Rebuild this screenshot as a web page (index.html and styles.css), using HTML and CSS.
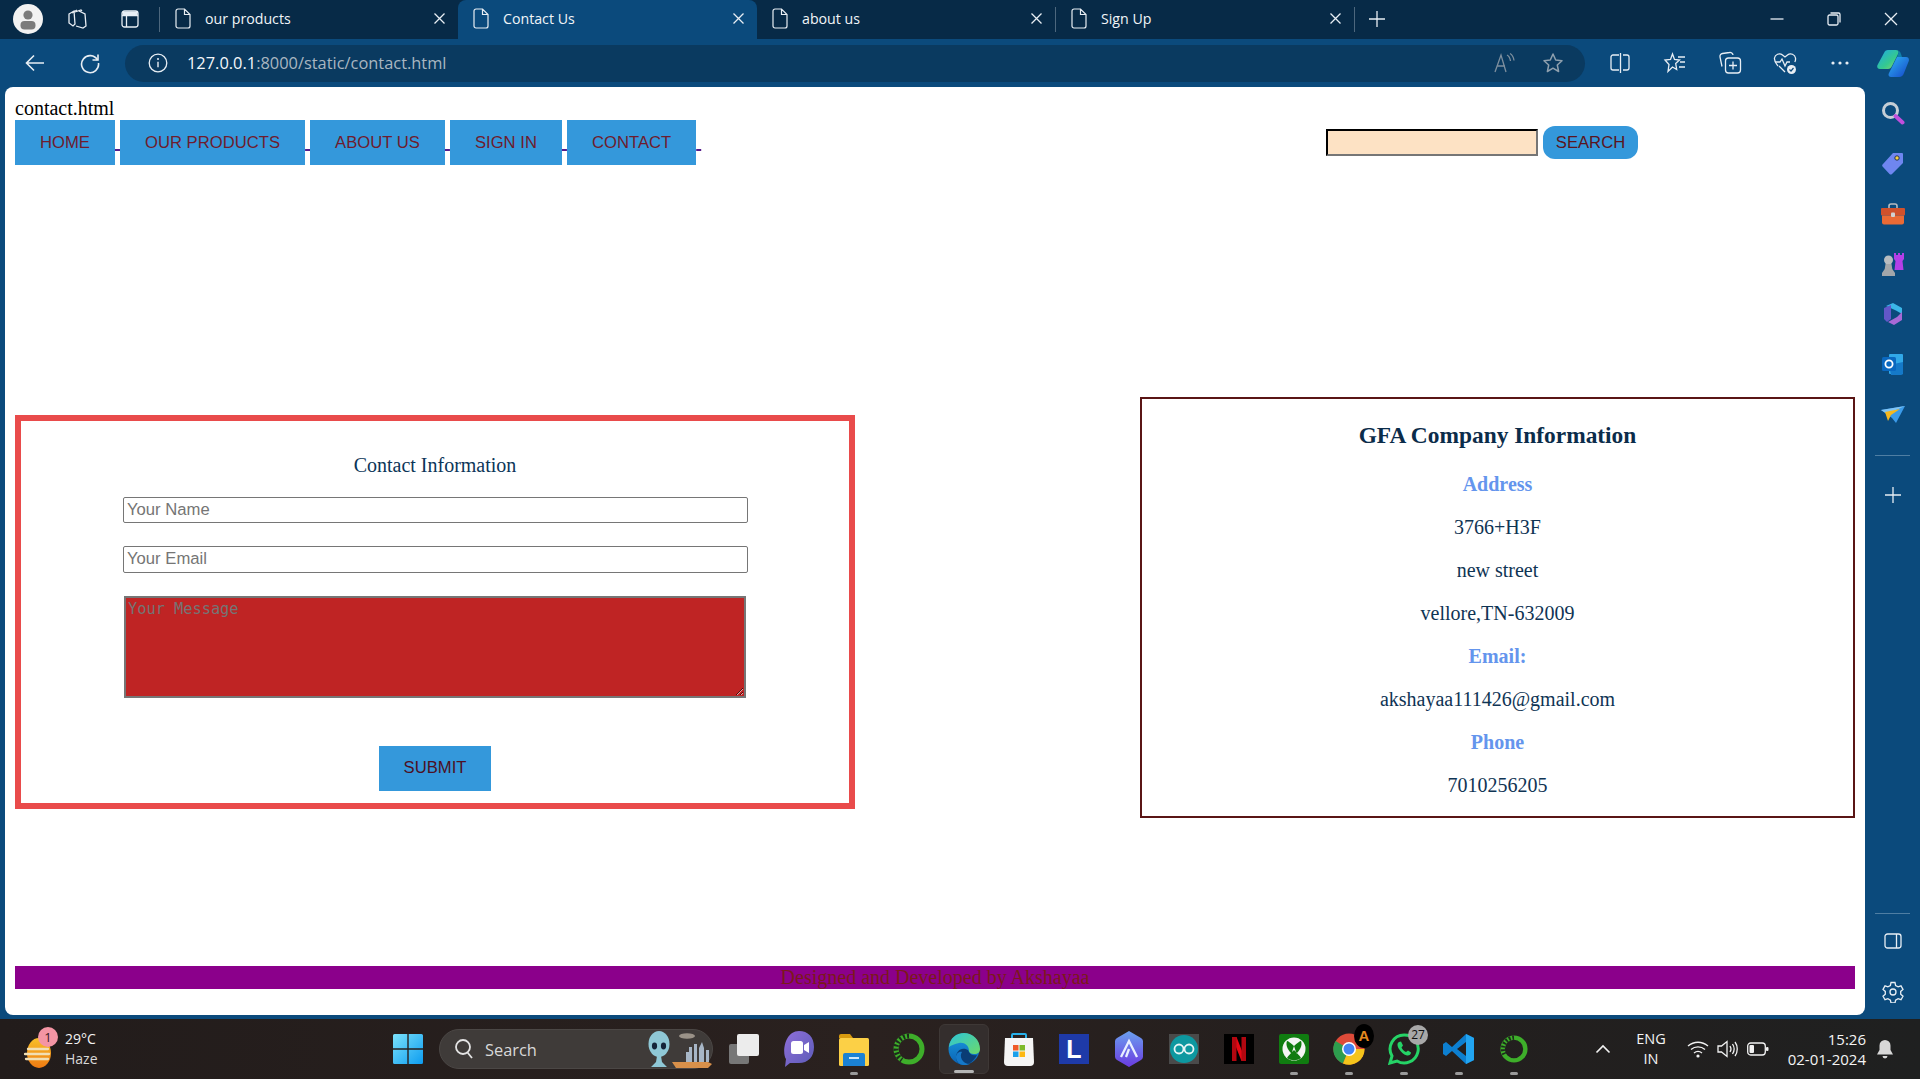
FILE: index.html
```html
<!DOCTYPE html>
<html lang="en">
<head>
<meta charset="utf-8">
<title>Contact Us</title>
<link rel="stylesheet" href="styles.css">
</head>
<body>
<div class="window">
  <header class="titlebar">
    <div class="avatar"><svg width="30" height="30" viewBox="0 0 30 30"><circle cx="15" cy="15" r="15" fill="#f2f2f2"/><circle cx="15" cy="11" r="4.6" fill="#7b7b7b"/><rect x="7.5" y="17" width="15" height="8.5" rx="4" fill="#7b7b7b"/></svg></div>
    <div class="tb-slot first"><svg width="22" height="22" viewBox="0 0 22 22" class="line"><path d="M3 6l5-3 1 13-2 2-4-3z"/><path d="M6 5l5-3"/><path d="M9 4l6-2 1 1"/><path d="M10 18l7 2 3-2-1-12-6-3"/></svg></div>
    <div class="tb-slot"><svg width="20" height="20" viewBox="0 0 20 20" class="line"><rect x="2" y="2" width="16" height="16" rx="2.5"/><path d="M2 6.5h16M6.5 6.5V18"/><rect x="2.5" y="2.5" width="15" height="4" fill="#e8eef4" stroke="none"/></svg></div>
    <span class="tb-sep"></span>
    <div class="tab"><svg class="doc" width="16" height="21" viewBox="0 0 16 21"><path d="M3 1h6.5L15 6.500V18a2 2 0 0 1-2 2H3a2 2 0 0 1-2-2V3a2 2 0 0 1 2-2zM9.500 1v5.500H15"/></svg><span class="tab-title">our products</span><svg class="tab-x line" width="11" height="11" viewBox="0 0 11 11"><path d="M.5.500l10 10M10.500.500l-10 10"/></svg></div>
    <div class="tab active"><svg class="doc" width="16" height="21" viewBox="0 0 16 21"><path d="M3 1h6.5L15 6.500V18a2 2 0 0 1-2 2H3a2 2 0 0 1-2-2V3a2 2 0 0 1 2-2zM9.500 1v5.500H15"/></svg><span class="tab-title">Contact Us</span><svg class="tab-x line" width="11" height="11" viewBox="0 0 11 11"><path d="M.5.500l10 10M10.500.500l-10 10"/></svg></div>
    <div class="tab"><svg class="doc" width="16" height="21" viewBox="0 0 16 21"><path d="M3 1h6.5L15 6.500V18a2 2 0 0 1-2 2H3a2 2 0 0 1-2-2V3a2 2 0 0 1 2-2zM9.500 1v5.500H15"/></svg><span class="tab-title">about us</span><svg class="tab-x line" width="11" height="11" viewBox="0 0 11 11"><path d="M.5.500l10 10M10.500.500l-10 10"/></svg></div>
    <span class="tb-sep tight"></span>
    <div class="tab"><svg class="doc" width="16" height="21" viewBox="0 0 16 21"><path d="M3 1h6.5L15 6.500V18a2 2 0 0 1-2 2H3a2 2 0 0 1-2-2V3a2 2 0 0 1 2-2zM9.500 1v5.500H15"/></svg><span class="tab-title">Sign Up</span><svg class="tab-x line" width="11" height="11" viewBox="0 0 11 11"><path d="M.5.500l10 10M10.500.500l-10 10"/></svg></div>
    <span class="tb-sep tight"></span>
    <div class="tb-plus"><svg width="18" height="18" viewBox="0 0 18 18" class="line"><path d="M9 1v16M1 9h16"/></svg></div>
    <div class="win-controls">
      <span class="win-btn"><svg width="14" height="14" viewBox="0 0 14 14" class="line"><path d="M0.500 7h13"/></svg></span>
      <span class="win-btn"><svg width="14" height="14" viewBox="0 0 14 14" class="line"><rect x="1" y="3" width="10" height="10" rx="1.500"/><path d="M3.500 1h8a1.500 1.500 0 0 1 1.500 1.500v8"/></svg></span>
      <span class="win-btn"><svg width="14" height="14" viewBox="0 0 14 14" class="line"><path d="M1 1l12 12M13 1L1 13"/></svg></span>
    </div>
  </header>

  <div class="toolbar">
    <div class="tool first"><svg width="22" height="22" viewBox="0 0 22 22" class="line wide"><path d="M20 11H3M10 3.500L2.500 11l7.500 7.500"/></svg></div>
    <div class="tool"><svg width="22" height="22" viewBox="0 0 22 22" class="line wide"><path d="M18.500 8A8.500 8.500 0 1 0 19.500 11"/><path d="M19 2.500V8h-5.500"/></svg></div>
    <div class="address">
      <svg class="info" width="20" height="20" viewBox="0 0 20 20"><circle cx="10" cy="10" r="8.800" fill="none" stroke="#e8eef4" stroke-width="1.300"/><path d="M10 8.800v5.500" stroke="#e8eef4" stroke-width="1.400"/><circle cx="10" cy="6" r="1" fill="#e8eef4"/></svg>
      <span class="url"><span class="url-host">127.0.0.1</span>:8000/static/contact.html</span>
      <svg class="read" width="22" height="22" viewBox="0 0 22 22"><path d="M2 20L8 3l5 17M4 14h8M14 3c2 1 3 3 3.500 6M17 1.500c2.500 1.500 3.500 3.500 4 7" fill="none" stroke="#7e8f9e" stroke-width="1.300"/></svg>
      <svg class="star" width="22" height="22" viewBox="0 0 22 22"><path d="M11 2l2.700 6 6.300.7-4.700 4.300 1.300 6.500L11 16.200 5.400 19.500 6.700 13 2 8.700 8.300 8z" fill="none" stroke="#8fa0ae" stroke-width="1.500" stroke-linejoin="round"/></svg>
    </div>
    <div class="tool gap"><svg width="22" height="22" viewBox="0 0 22 22" class="line"><path d="M10 3H4a2 2 0 0 0-2 2v11a2 2 0 0 0 2 2h6M14 3h4a2 2 0 0 1 2 2v11a2 2 0 0 1-2 2h-4M11.500 1v20" /></svg></div>
    <div class="tool"><svg width="24" height="22" viewBox="0 0 24 22" class="line"><path d="M9.500 2l2 5.500 5 .5-3.800 3.500 1 6-4.200-2.500-4.500 4.500 1-7L2 8l5.500-.5zM15 5h7M17 10h5M16 15h6"/></svg></div>
    <div class="tool"><svg width="24" height="24" viewBox="0 0 24 24" class="line"><path d="M4 15.500L2 6a3 3 0 0 1 2.500-3.500l7-1a3 3 0 0 1 3.500 2.500"/><rect x="7.500" y="7" width="15" height="15" rx="3"/><path d="M15 10.500v8M11 14.500h8"/></svg></div>
    <div class="tool"><svg width="24" height="24" viewBox="0 0 24 24"><path d="M5 15C2.500 12 1 10.500 1.500 7 2 3.500 6.500 1.500 9.500 4l2.500 2 2.500-2c3-2.500 7.500-.5 8 3 .2 1.500-.1 3-.7 4" fill="none" stroke="#e8eef4" stroke-width="1.300"/><path d="M2 11h5l2-3 3 7 2-4h3M6 15l6 6" fill="none" stroke="#e8eef4" stroke-width="1.300"/><circle cx="18.500" cy="18.500" r="4.500" fill="#e8eef4"/><path d="M16.500 18.500l1.500 1.500 2.500-3" fill="none" stroke="#0b4a7c" stroke-width="1.200"/></svg></div>
    <div class="tool"><svg width="20" height="6" viewBox="0 0 20 6"><circle cx="3" cy="3" r="1.600" fill="#e8eef4"/><circle cx="10" cy="3" r="1.600" fill="#e8eef4"/><circle cx="17" cy="3" r="1.600" fill="#e8eef4"/></svg></div>
    <div class="copilot"><svg width="32" height="28" viewBox="0 0 32 28"><defs><linearGradient id="cp1" x1="0" y1="0" x2="1" y2="1"><stop offset="0" stop-color="#1ea8e8"/><stop offset=".6" stop-color="#35c98f"/><stop offset="1" stop-color="#8ed66b"/></linearGradient><linearGradient id="cp2" x1="0" y1="0" x2="1" y2="1"><stop offset="0" stop-color="#2fb5f5"/><stop offset="1" stop-color="#1546c9"/></linearGradient></defs><path d="M11 1h8c2 0 3 1 2.500 3L15 17c-1 2-2 3-4 3H3c-2.500 0-3.300-2-2.500-4L7 4c.8-2 2-3 4-3z" fill="url(#cp1)"/><path d="M20 8h9c2.500 0 3.300 2 2.800 4L27 24c-.8 2.500-2.500 4-5 4h-8c-2.500 0-3-2-2-4z" fill="url(#cp2)"/><path d="M19 1c2.500 0 4 1 5 4l1 3h-5l1.500-4C22 2 21 1 19 1z" fill="#0f7fa8"/></svg></div>
  </div>

  <div class="workspace">
    <main class="page">
      <div class="doc-name">contact.html</div>
      <div class="topbar">
        <nav class="nav"><a class="nav-link" href="#"><button class="btn" type="button">HOME</button>&nbsp;</a><a class="nav-link" href="#"><button class="btn" type="button">OUR PRODUCTS</button>&nbsp;</a><a class="nav-link" href="#"><button class="btn" type="button">ABOUT US</button>&nbsp;</a><a class="nav-link" href="#"><button class="btn" type="button">SIGN IN</button>&nbsp;</a><a class="nav-link" href="#"><button class="btn" type="button">CONTACT</button>&nbsp;</a></nav>
        <form class="search"><input class="search-input" type="text"><button class="search-btn" type="button">SEARCH</button></form>
      </div>
      <div class="content">
        <form class="contact-form">
          <h3 class="form-title">Contact Information</h3>
          <input class="field name" type="text" placeholder="Your Name">
          <input class="field email" type="email" placeholder="Your Email">
          <textarea class="message" placeholder="Your Message"></textarea>
          <button class="btn submit" type="button">SUBMIT</button>
        </form>
        <section class="company">
          <h2 class="company-title">GFA Company Information</h2>
          <p class="label">Address</p>
          <p>3766+H3F</p>
          <p>new street</p>
          <p>vellore,TN-632009</p>
          <p class="label">Email:</p>
          <p>akshayaa111426@gmail.com</p>
          <p class="label">Phone</p>
          <p>7010256205</p>
        </section>
      </div>
      <footer class="site-footer">Designed and Developed by Akshayaa</footer>
    </main>
    <aside class="sidebar">
      <div class="side-item"><svg width="24" height="24" viewBox="0 0 24 24"><circle cx="9.500" cy="9.500" r="7" fill="none" stroke="#c5ced6" stroke-width="3"/><path d="M14.500 15l7 6.500" stroke="#c04fdc" stroke-width="4" stroke-linecap="round"/></svg></div>
      <div class="side-item"><svg width="24" height="24" viewBox="0 0 24 24"><path d="M12 2h9a1 1 0 0 1 1 1v9L11 23a2 2 0 0 1-2.500 0L2 16a2 2 0 0 1 0-3z" fill="#6f86f0"/><circle cx="16" cy="7" r="2.200" fill="#f8d040" stroke="#20305a"/></svg></div>
      <div class="side-item"><svg width="24" height="22" viewBox="0 0 24 22"><path d="M8 5V3a2 2 0 0 1 2-2h4a2 2 0 0 1 2 2v2" fill="none" stroke="#b8bcc0" stroke-width="1.600"/><rect y="5" width="24" height="7.500" rx="1" fill="#d0512c"/><path d="M1 12.500h22v7a2 2 0 0 1-2 2H3a2 2 0 0 1-2-2z" fill="#ea6a35"/><rect x="10" y="9.500" width="4" height="4.500" rx="1" fill="#d2d2d2"/></svg></div>
      <div class="side-item"><svg width="24" height="24" viewBox="0 0 24 24"><path d="M13 1h2v2h2V1h2v2h2V1h2v6l-1.500 2 1 9h-9l1-9L13 7z" fill="#b43fe8"/><circle cx="7.500" cy="8" r="4.500" fill="#b8bcc0"/><path d="M4.500 12h6l.8 5 2.700 4v3H1v-3l2.700-4z" fill="#a2a6aa"/></svg></div>
      <div class="side-item"><svg width="24" height="24" viewBox="0 0 24 24"><path d="M12 1l9 5v6l-6-3.500L5 4z" fill="#3bb6e8"/><path d="M3 6l7-3v14l-4 3-3-3z" fill="#6257c9"/><path d="M21 10v8l-8 5-6-3 9-5z" fill="#a869d6"/><path d="M10 9l6 3-6 4z" fill="#0b4a7c"/></svg></div>
      <div class="side-item"><svg width="24" height="24" viewBox="0 0 24 24"><rect x="8" y="1" width="14" height="20" rx="1" fill="#31a8e8"/><path d="M8 12l14-3v11a2 2 0 0 1-2 2H10z" fill="#1579c8"/><rect x="1" y="4" width="14" height="14" rx="1.500" fill="#0a68c0"/><circle cx="8" cy="11" r="3.600" fill="none" stroke="#fff" stroke-width="1.800"/></svg></div>
      <div class="side-item"><svg width="24" height="18" viewBox="0 0 24 18"><path d="M0 4L24 0 15 17 11 12z" fill="#3b9bea"/><path d="M0 4l24-4L6 8z" fill="#7fc4f5"/><path d="M4 6l3 9 3-6 9-6z" fill="#f5b81e"/></svg></div>
      <div class="side-sep"></div>
      <div class="side-item plus"><svg width="16" height="16" viewBox="0 0 16 16" class="line"><path d="M8 0v16M0 8h16"/></svg></div>
      <div class="side-bottom">
        <div class="side-sep"></div>
        <div class="side-item small"><svg width="18" height="16" viewBox="0 0 18 16" class="line"><rect x="1" y="1" width="16" height="14" rx="2.500"/><path d="M12.500 1v14"/></svg></div>
        <div class="side-item small"><svg width="22" height="22" viewBox="0 0 22 22" class="line"><circle cx="11" cy="11" r="3"/><path d="M9 1.500h4l.6 3 2.500 1.400 2.900-1 2 3.500-2.300 2 0 2.800 2.300 2-2 3.500-2.900-1-2.500 1.400-.6 2.900H9l-.6-2.900-2.500-1.400-2.900 1-2-3.500 2.300-2v-2.800L1 8.400l2-3.500 2.900 1 2.500-1.400z"/></svg></div>
      </div>
    </aside>
  </div>

  <div class="taskbar">
    <div class="weather">
      <div class="weather-icon"><svg width="28" height="36" viewBox="0 0 28 36"><defs><linearGradient id="sun" x1="0" y1="0" x2="0" y2="1"><stop offset="0" stop-color="#f7c02a"/><stop offset="1" stop-color="#ef7a12"/></linearGradient></defs><ellipse cx="15" cy="19" rx="12" ry="15" fill="url(#sun)"/><path d="M4 15h20M1 20h24M2 25h22" stroke="#f1dfb4" stroke-width="2.300" stroke-linecap="round"/></svg><span class="weather-badge">1</span></div>
      <div class="weather-text"><span>29°C</span><span class="dim">Haze</span></div>
    </div>
    <div class="tasks">
      <div class="task"><svg width="30" height="30" viewBox="0 0 30 30"><defs><linearGradient id="winl" x1="0" y1="0" x2="1" y2="1"><stop offset="0" stop-color="#7be2fb"/><stop offset="1" stop-color="#0d9cf0"/></linearGradient></defs><path d="M0 1.500A1.500 1.500 0 0 1 1.500 0H14.300v14.300H0zM15.700 0H28.500A1.500 1.500 0 0 1 30 1.500V14.300H15.700zM0 15.700H14.300V30H1.500A1.500 1.500 0 0 1 0 28.500zM15.700 15.700H30V28.500A1.500 1.500 0 0 1 28.500 30H15.700z" fill="url(#winl)"/></svg></div>
      <div class="search-pill">
        <svg width="20" height="22" viewBox="0 0 20 22"><circle cx="9" cy="9" r="7" fill="none" stroke="#e4e4e4" stroke-width="1.800"/><path d="M13.500 14.500L18 20" stroke="#e4e4e4" stroke-width="1.800"/></svg>
        <span class="pill-text">Search</span>
        <svg class="alien" width="66" height="38" viewBox="0 0 66 38"><path d="M24 32h36l4 2-4 4H28z" fill="#d8904a"/><path d="M38 32V22h3v-5h3v15zM46 32V14h3v18zM51 32V18l3-6 2 6v14zM58 32V20h3v12z" fill="#a7b6c6"/><ellipse cx="39" cy="6" rx="8" ry="2.800" fill="#9a9288"/><ellipse cx="11" cy="14" rx="10.500" ry="13" fill="#8fc8d6"/><ellipse cx="6.500" cy="16" rx="2.600" ry="3.400" fill="#15253a"/><ellipse cx="15.500" cy="16" rx="2.600" ry="3.400" fill="#15253a"/><path d="M9 26h4l1 6 5 5H3l5-5z" fill="#8fc8d6"/></svg>
      </div>
      <div class="task taskview"><svg width="30" height="30" viewBox="0 0 30 30"><rect x="0" y="10" width="20" height="20" rx="2" fill="#777"/><rect x="8" y="0" width="22" height="22" rx="2" fill="#ececec"/></svg></div>
      <div class="task"><svg width="32" height="38" viewBox="0 0 32 38"><defs><linearGradient id="meet" x1="0" y1="0" x2="1" y2="1"><stop offset="0" stop-color="#8f6fd8"/><stop offset="1" stop-color="#5b5bb8"/></linearGradient></defs><path d="M16 1c9 0 15 6 15 16s-6 16-15 16H7l-5 4 1-8C-1 24 1 1 16 1z" fill="url(#meet)"/><rect x="8" y="11" width="12" height="13" rx="2.500" fill="#fff"/><path d="M21 15l5-3v11l-5-3z" fill="#fff"/></svg></div>
      <div class="task on"><svg width="30" height="33" viewBox="0 0 30 33"><path d="M0 3a2 2 0 0 1 2-2h9l3 4H0z" fill="#d79a0f"/><rect y="5" width="30" height="28" rx="1.500" fill="#fcd046"/><path d="M6 20h18a2 2 0 0 1 2 2v11H4V22a2 2 0 0 1 2-2z" fill="#1b82d4"/><rect x="10" y="24" width="10" height="2" fill="#cfe8fa"/></svg></div>
      <div class="task"><svg width="32" height="32" viewBox="0 0 32 32"><circle cx="16" cy="16" r="13" fill="none" stroke="#3eae2a" stroke-width="5"/><path d="M16 3A13 13 0 0 0 9 27" fill="none" stroke="#1d2b1c" stroke-width="5" stroke-dasharray="2 2"/></svg></div>
      <div class="task active-task"><svg width="32" height="34" viewBox="0 0 32 34"><defs><linearGradient id="edge1" x1="0" y1="0" x2="1" y2="1"><stop offset="0" stop-color="#2cc4d8"/><stop offset="1" stop-color="#6cd96a"/></linearGradient><linearGradient id="edge2" x1="0" y1="0" x2="0" y2="1"><stop offset="0" stop-color="#1a9be0"/><stop offset="1" stop-color="#0b63b4"/></linearGradient></defs><circle cx="16" cy="17" r="15.500" fill="url(#edge2)"/><path d="M1 15C2 6 8 1 16 1c9 0 16 7 16 16 0 3-2 5-6 5-3 0-5-1-5-3 0-6-5-9-10-8-4 1-8 2-10 4z" fill="url(#edge1)"/><path d="M20 18c2 5 6 6 9 5-3 6-8 10-14 10-4 0-7-3-7-8s5-11 12-7z" fill="#0a3d75"/><path d="M14 20c-3 4 0 12 8 12-2 1-5 1-7 1-4 0-7-4-7-8 0-3 3-6 6-5z" fill="#1578c8"/></svg></div>
      <div class="task"><svg width="30" height="34" viewBox="0 0 30 34"><path d="M8 6V3a1 1 0 0 1 1-1h12a1 1 0 0 1 1 1v3" fill="none" stroke="#27b0ea" stroke-width="2"/><path d="M1 6h28l1 24a4 4 0 0 1-4 4H4a4 4 0 0 1-4-4z" fill="#f5f5f5"/><rect x="9" y="13" width="5.500" height="5.500" fill="#ef5a28"/><rect x="15.500" y="13" width="5.500" height="5.500" fill="#7dba2a"/><rect x="9" y="19.500" width="5.500" height="5.500" fill="#1aa0ea"/><rect x="15.500" y="19.500" width="5.500" height="5.500" fill="#fdb813"/></svg></div>
      <div class="task"><span class="app-l">L</span></div>
      <div class="task"><svg width="28" height="36" viewBox="0 0 28 36"><defs><linearGradient id="arc" x1="0" y1="0" x2="0" y2="1"><stop offset="0" stop-color="#6aa0ef"/><stop offset="1" stop-color="#6b3be0"/></linearGradient></defs><path d="M14 0l12 7a4 4 0 0 1 2 3v16a4 4 0 0 1-2 3l-12 7-12-7a4 4 0 0 1-2-3V10a4 4 0 0 1 2-3z" fill="url(#arc)"/><path d="M6 26l8-16 8 16M14 18l-3 8" fill="none" stroke="#e9f0ff" stroke-width="2.300"/></svg></div>
      <div class="task"><span class="app-ino"><svg width="28" height="28" viewBox="0 0 28 28"><circle cx="14" cy="14" r="14" fill="#0d98a0"/><circle cx="9" cy="14" r="4.500" fill="none" stroke="#e6f5f5" stroke-width="1.800"/><circle cx="19" cy="14" r="4.500" fill="none" stroke="#e6f5f5" stroke-width="1.800"/></svg></span></div>
      <div class="task"><span class="app-n"><svg width="14" height="24" viewBox="0 0 14 24"><path d="M0 0h4.500L14 24H9.500z" fill="#e50914"/><path d="M0 0h4.500v24H0zM9.500 0H14v24H9.500z" fill="#b20710"/></svg></span></div>
      <div class="task on"><span class="app-x"><svg width="24" height="24" viewBox="0 0 24 24"><circle cx="12" cy="12" r="11.500" fill="#f4f4f4"/><path d="M12 9C9 6 6 4 5 4c-2 5 2 10 4.500 12.500M12 9c3-3 6-5 7-5 2 5-2 10-4.500 12.500M12 13c-3 3-6 6-7 8 4 3 10 3 14 0-1-2-4-5-7-8z" fill="#107c10"/></svg></span></div>
      <div class="task on badge-host"><svg width="32" height="32" viewBox="0 0 32 32"><circle cx="16" cy="16" r="15.500" fill="#dd4b39"/><path d="M16 16L2.500 8A15.500 15.500 0 0 0 10 30.500z" fill="#2d9d4e"/><path d="M16 16l-6 14.500A15.500 15.500 0 0 0 31.500 16z" fill="#f5c41b"/><circle cx="16" cy="16" r="7" fill="#fff"/><circle cx="16" cy="16" r="5.500" fill="#4285f4"/></svg><span class="app-badge amazon">A</span></div>
      <div class="task on badge-host"><svg width="32" height="32" viewBox="0 0 32 32"><path d="M16 2a14 14 0 0 0-12 21L2 30l7-2A14 14 0 1 0 16 2z" fill="none" stroke="#25d366" stroke-width="3"/><path d="M11 9c-2 1-2 4 0 7s5 6 8 6.500c2 .5 4-1 4-3l-3-2-2 1.500c-2-.8-3.500-2.500-4.500-4.500l1.500-2-2-4z" fill="#25d366"/></svg><span class="app-badge count">27</span></div>
      <div class="task on"><svg width="32" height="32" viewBox="0 0 32 32"><path d="M23 1l8 4v22l-8 4L9 18l-6 5-3-2v-10l3-2 6 5z" fill="#0d7fd0"/><path d="M23 1l8 4v22l-8 4z" fill="#22a5f1"/><path d="M23 9v14l-9-7z" fill="#231f1f"/></svg></div>
      <div class="task on"><svg width="28" height="28" viewBox="0 0 32 32"><circle cx="16" cy="16" r="13" fill="none" stroke="#3eae2a" stroke-width="5"/><path d="M16 3A13 13 0 0 0 5 22" fill="none" stroke="#1d2b1c" stroke-width="5" stroke-dasharray="2 2"/></svg></div>
    </div>
    <div class="tray">
      <svg class="caret" width="16" height="10" viewBox="0 0 16 10"><path d="M1.500 8.500L8 2l6.500 6.500" fill="none" stroke="#f2f2f2" stroke-width="1.600"/></svg>
      <div class="lang"><span>ENG</span><span>IN</span></div>
      <svg class="wifi" width="22" height="18" viewBox="0 0 22 18"><path d="M1 6c6-5 14-5 20 0M4 9.500c4-3.500 10-3.500 14 0M7 13c2.500-2 5.500-2 8 0" fill="none" stroke="#f2f2f2" stroke-width="1.400"/><circle cx="11" cy="16" r="1.600" fill="#f2f2f2"/></svg>
      <svg class="vol" width="22" height="18" viewBox="0 0 22 18"><path d="M1 6h3.500L10 1.500v15L4.500 12H1zM13 6c1.200 1.800 1.200 4.200 0 6M15.500 4c2 3 2 7 0 10M18 2c3 4 3 10 0 14" fill="none" stroke="#f2f2f2" stroke-width="1.300"/></svg>
      <svg class="batt" width="22" height="14" viewBox="0 0 22 14"><rect x=".7" y="1" width="17.600" height="12" rx="3" fill="none" stroke="#f2f2f2" stroke-width="1.300"/><rect x="2.500" y="3" width="4.500" height="8" rx="1" fill="#f2f2f2"/><rect x="19" y="5" width="2.500" height="4" rx="1" fill="#f2f2f2"/></svg>
      <div class="clock"><span>15:26</span><span>02-01-2024</span></div>
      <svg class="bell" width="18" height="20" viewBox="0 0 18 20"><path d="M9 1a5.500 5.500 0 0 1 5.500 5.500V11l2.500 4.500H1L3.500 11V6.500A5.500 5.500 0 0 1 9 1z" fill="#d8d8d8"/><path d="M6.500 17a2.500 2.500 0 0 0 5 0z" fill="#d8d8d8"/></svg>
    </div>
  </div>
</div>
</body>
</html>
```

FILE: styles.css
```css
* { box-sizing: border-box; }
html, body { margin: 0; padding: 0; height: 100%; overflow: hidden; }
body { font-family: "Liberation Serif", serif; background: #0b4a7c; }
.window { width: 1920px; height: 1079px; display: flex; flex-direction: column; }
.line { fill: none; stroke: #e8eef4; stroke-width: 1.3; }
.line.wide { stroke-width: 1.6; }

/* title bar */
.titlebar { height: 39px; flex: none; background: #072a47; display: flex; align-items: center; padding-left: 13px; font-family: "Open Sans", sans-serif; color: #f1f5f8; font-size: 14.2px; }
.avatar { width: 30px; height: 30px; flex: none; margin-bottom: 1px; }
.avatar svg { display: block; }
.tb-slot { width: 44px; height: 30px; display: flex; align-items: center; justify-content: center; flex: none; margin-bottom: 1px; }
.tb-slot.first { margin-left: 12px; margin-right: 9px; }
.tb-sep { width: 1px; height: 25px; background: #4d677d; flex: none; margin: 0 0 1px 7px; }
.tb-sep.tight { margin: 0 0 1px 0; }
.tab { width: 298px; height: 39px; flex: none; display: flex; align-items: center; padding: 0 0 2px 15px; }
.tab.active { background: #0b4a7c; border-radius: 8px 8px 0 0; width: 299px; }
.doc { fill: none; stroke: #e8eef4; stroke-width: 1.2; flex: none; }
.tab-title { margin-left: 14px; white-space: nowrap; }
.tab-x { margin-left: auto; margin-right: 13px; flex: none; }
.tb-plus { width: 44px; display: flex; justify-content: center; flex: none; margin-bottom: 1px; }
.win-controls { margin-left: auto; display: flex; flex: none; padding-right: 1px; margin-bottom: 1px; }
.win-btn { width: 57px; display: flex; justify-content: center; }

/* toolbar */
.toolbar { height: 48px; flex: none; background: #0b4a7c; display: flex; align-items: center; padding-left: 7px; font-family: "Open Sans", sans-serif; }
.tool { width: 55px; height: 37px; flex: none; display: flex; align-items: center; justify-content: center; }
.tool.gap { margin-left: 7px; }
.address { width: 1460px; height: 37px; flex: none; margin-left: 8px; border-radius: 19px; background: #0a3a60; display: flex; align-items: center; padding-left: 23px; }
.info { flex: none; }
.url { margin: 0 0 2px 19px; font-size: 16.4px; color: #a9b6c0; white-space: nowrap; }
.url-host { color: #f4f7fa; }
.read { margin-left: auto; flex: none; }
.star { flex: none; margin-left: 27px; margin-right: 21px; }
.copilot { width: 52px; flex: none; display: flex; justify-content: center; }

/* workspace */
.workspace { flex: none; height: 932px; display: flex; }
.page { width: 1860px; height: 928px; margin-left: 5px; flex: none; background: #fff; border-radius: 8px; padding: 10px 10px 0; font-size: 20px; line-height: 23px; color: #000; overflow: hidden; }
.doc-name { height: 23px; }
.topbar { height: 45px; display: flex; align-items: flex-start; }
.nav { height: 45px; white-space: nowrap; font-size: 20px; line-height: 23px; flex: none; }
.nav-link { color: #551a8b; text-decoration: underline; }
.btn { display: inline-block; height: 45px; padding: 0 25px; border: 0; background: #3498db; color: #6e1c2e; font-family: "Liberation Sans", Arial, sans-serif; font-size: 16.67px; vertical-align: baseline; }
.search { margin-left: auto; margin-right: 217px; height: 45px; display: flex; align-items: center; }
.search-input { width: 212px; height: 27px; background: #fde2c4; border: 2px inset #767676; border-color: #222 #767676 #767676 #222; padding: 1px 2px; }
.search-btn { width: 95px; height: 33px; margin-left: 5px; padding: 0; border: 0; border-radius: 12px; background: #3498db; color: #5a1420; font-family: "Liberation Sans", Arial, sans-serif; font-size: 16.67px; }
.content { display: flex; justify-content: space-between; align-items: flex-start; margin-top: 232px; }
.contact-form { width: 840px; height: 394px; margin-top: 18px; border: 6px solid #e94b4b; display: flex; flex-direction: column; align-items: center; }
.form-title { margin: 33px 0 0; font-size: 20px; line-height: 23px; font-weight: 400; color: #0b3558; }
.field { width: 625px; margin-left: 1px; border: 1px solid #767676; border-radius: 2px; padding: 0 3px 1px; font-family: "Liberation Sans", Arial, sans-serif; font-size: 16.67px; background: #fff; }
.field::placeholder { color: #757575; }
.field.name { height: 26px; margin-top: 20px; }
.field.email { height: 27px; margin-top: 23px; padding-bottom: 2px; }
.message { width: 622px; height: 102px; margin-top: 23px; border: 2px solid #767676; background: #bf2424; padding: 2px; font-family: "DejaVu Sans Mono", monospace; font-size: 15.3px; display: block; }
.message::placeholder { color: #757575; }
.btn.submit { margin-top: 48px; width: 112px; padding: 0 0 2px; color: #4c1024; flex: none; }
.company { width: 715px; height: 421px; border: 2px solid #5a1515; text-align: center; color: #0f3454; display: flow-root; }
.company-title { margin: 23px 0; font-size: 23.4px; line-height: 27px; font-weight: 700; color: #0b2c4a; }
.company p { margin: 20px 0; position: relative; top: .5px; }
.company .label { font-weight: 700; color: #6495ed; }
.company-title + .label { margin-top: 0; }
.site-footer { margin-top: 148px; height: 23px; background: #8b008b; color: #7a1a1a; text-align: center; }

/* sidebar */
.sidebar { width: 55px; flex: none; display: flex; flex-direction: column; padding-top: 1px; }
.side-item { height: 50.3px; display: flex; align-items: center; justify-content: center; flex: none; }
.side-sep { width: 35px; height: 1px; background: #4f7ea3; margin: 15px auto 0; flex: none; }
.side-item.plus { margin-top: 14px; }
.side-bottom { margin-top: auto; padding-bottom: 1.5px; }
.side-bottom .side-sep { margin: 0 auto 1.5px; }
.side-item.small { height: 51px; }

/* taskbar */
.taskbar { height: 60px; flex: none; background: linear-gradient(90deg, #221c1b 0%, #2a211f 45%, #241f1e 70%, #1f2020 100%); display: flex; align-items: center; color: #f4f4f4; font-family: "Open Sans", sans-serif; font-size: 14px; }
.weather { width: 383px; flex: none; display: flex; align-items: center; padding-left: 24px; }
.weather-icon { width: 30px; height: 38px; position: relative; flex: none; }
.weather-icon svg { position: absolute; left: 0; top: 4px; }
.weather-badge { position: absolute; left: 14px; top: -3px; width: 20px; height: 20px; border-radius: 50%; background: #f495a4; color: #3a1a1e; font-size: 13px; line-height: 20px; text-align: center; }
.weather-text { margin-left: 11px; display: flex; flex-direction: column; line-height: 20px; }
.dim { color: #d8d8d8; }
.tasks { display: flex; align-items: center; gap: 5px; flex: none; }
.task { width: 50px; height: 50px; display: flex; align-items: center; justify-content: center; flex: none; position: relative; }
.task.taskview { margin-left: 1px; }
.task.on::after { content: ""; position: absolute; left: 21px; bottom: -1px; width: 8px; height: 3px; border-radius: 2px; background: #9a9a9a; }
.active-task { background: #342e2d; border: 1px solid #3e3836; border-radius: 6px; }
.active-task::after { content: ""; position: absolute; left: 14px; bottom: 0; width: 20px; height: 3px; border-radius: 2px; background: #b5b5b5; }
.search-pill { width: 274px; height: 40px; flex: none; margin-left: 1px; border-radius: 20px; background: #3f3b39; border: 1px solid #4b4745; display: flex; align-items: center; padding-left: 14px; }
.pill-text { margin-left: 11px; font-size: 16.4px; color: #d8d8d8; }
.alien { margin-left: auto; margin-right: -2px; flex: none; }
.app-l { width: 30px; height: 30px; background: #1e3aa8; color: #fff; font: 700 25px/30px "Liberation Sans", sans-serif; text-align: center; }
.app-ino { width: 30px; height: 30px; background: #4a4a4a; display: flex; align-items: center; justify-content: center; }
.app-n { width: 30px; height: 30px; background: #000; display: flex; align-items: center; justify-content: center; }
.app-x { width: 30px; height: 30px; background: #107c10; border-radius: 2px; display: flex; align-items: center; justify-content: center; }
.app-badge { position: absolute; border-radius: 50%; text-align: center; }
.amazon { left: 30px; top: 0; width: 20px; height: 24px; background: #000; color: #e58a1f; font: 700 15px/24px "Liberation Sans", sans-serif; }
.count { left: 29px; top: 1px; width: 20px; height: 20px; background: #a8a8a8; color: #111; font-size: 12px; line-height: 20px; }
.tray { flex: none; margin-left: auto; width: 337px; display: flex; align-items: center; height: 60px; }
.caret { margin-left: 12px; flex: none; }
.lang { width: 60px; margin-left: 10px; display: flex; flex-direction: column; align-items: center; line-height: 20px; font-size: 14.5px; }
.wifi { margin-left: 6px; flex: none; }
.vol { margin-left: 8px; flex: none; }
.batt { margin-left: 8px; flex: none; }
.clock { width: 97px; display: flex; flex-direction: column; align-items: flex-end; line-height: 20px; font-size: 15px; }
.bell { margin-left: 10px; flex: none; }
```
